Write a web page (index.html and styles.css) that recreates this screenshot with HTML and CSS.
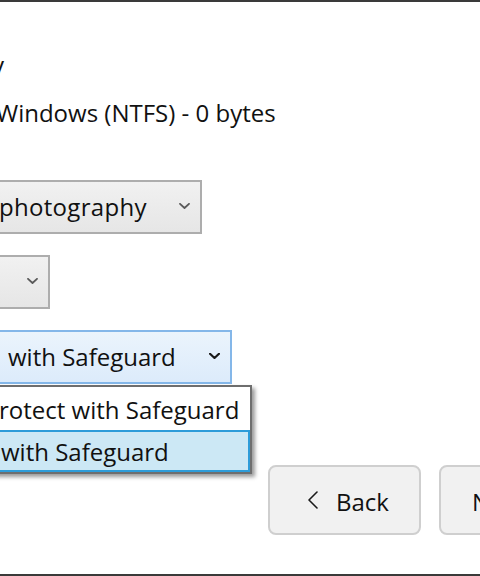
FILE: index.html
```html
<!DOCTYPE html>
<html lang="en">
<head>
<meta charset="utf-8">
<title>Safeguard setup</title>
<link rel="stylesheet" href="styles.css">
</head>
<body>
<div class="frame">
  <div class="content">
    <div class="line line-top"><span class="pre"><span>Summary</span></span></div>
    <div class="line line-drive">Windows (NTFS) - 0 bytes</div>

    <div class="select select-folder">
      <span class="select-text">photography</span>
      <svg class="chev" width="11" height="6" viewBox="0 0 11 6"><polyline points="1,0.8 5.5,5 10,0.8"/></svg>
    </div>

    <div class="select select-small">
      <span class="select-text"></span>
      <svg class="chev" width="11" height="6" viewBox="0 0 11 6"><polyline points="1,0.8 5.5,5 10,0.8"/></svg>
    </div>

    <div class="select-wrap">
      <div class="select select-open">
        <span class="select-text"><span class="pre pre-gap"><span>Protect </span></span>with Safeguard</span>
        <svg class="chev chev-dark" width="11" height="6" viewBox="0 0 11 6"><polyline points="1,0.8 5.5,5 10,0.8"/></svg>
      </div>
      <ul class="menu">
        <li class="opt"><span class="pre"><span>Do not p</span></span>rotect with Safeguard</li>
        <li class="opt opt-sel"><span class="pre"><span>Protect </span></span>with Safeguard</li>
      </ul>
    </div>
  </div>

  <div class="footer">
    <button class="btn btn-back" type="button">
      <svg class="btn-chev" width="12" height="18" viewBox="0 0 12 18"><polyline points="10,1 2,9 10,17"/></svg>
      <span>Back</span>
    </button>
    <button class="btn btn-next" type="button">
      <span>Next</span>
      <svg class="btn-chev" width="12" height="18" viewBox="0 0 12 18"><polyline points="2,1 10,9 2,17"/></svg>
    </button>
  </div>
</div>
</body>
</html>
```

FILE: styles.css
```css
html, body {
  margin: 0;
  padding: 0;
  width: 480px;
  height: 576px;
  overflow: hidden;
  background: #ffffff;
}

.frame {
  box-sizing: border-box;
  width: 480px;
  height: 576px;
  border-top: 2px solid #3a3a3a;
  border-bottom: 2px solid #3a3a3a;
  background: #ffffff;
  display: flex;
  flex-direction: column;
  overflow: hidden;
  font-family: "Open Sans", "Noto Sans", sans-serif;
  font-size: 24px;
  line-height: 32px;
  color: #111111;
}

.content {
  margin-left: -40px;
  flex: none;
}

.line {
  height: 32px;
  white-space: nowrap;
}

.line-top {
  margin-top: 47px;
  padding-left: 44px;
}

.line-drive {
  margin-top: 16px;
  padding-left: 36px;
}

/* hidden start of a label that runs off the left edge:
   a zero-width box whose content overflows to the left */
.pre {
  display: inline-flex;
  width: 0;
  justify-content: flex-end;
  white-space: pre;
}

.pre > span {
  flex: none;
}

.pre-gap > span {
  padding-right: 8px;
}

.select {
  box-sizing: border-box;
  height: 54px;
  border: 2px solid #adadad;
  background: linear-gradient(#f1f1f1, #e6e6e6);
  display: flex;
  align-items: center;
  white-space: nowrap;
}

.select-text {
  flex: 1;
  line-height: 32px;
  height: 32px;
  overflow: hidden;
}

.select-folder {
  margin-top: 51px;
  width: 242px;
}

.select-folder .select-text {
  padding-left: 37px;
  letter-spacing: 0.3px;
}

.select-small {
  margin-top: 21px;
  width: 90px;
}

.select-wrap {
  position: relative;
  margin-top: 21px;
  width: 272px;
}

.select-open {
  width: 272px;
  border-color: #84b7e9;
  background: linear-gradient(#ebf4fc, #dcebfb);
}

.select-open .select-text {
  padding-left: 46px;
}

.chev {
  flex: none;
  margin-right: 10px;
  margin-bottom: 3px;
  fill: none;
  stroke: #5a5a5a;
  stroke-width: 1.8;
  stroke-linecap: round;
  stroke-linejoin: round;
}

.chev-dark {
  stroke: #1a1a1a;
  stroke-width: 2.2;
}

.menu {
  position: absolute;
  top: calc(100% + 1px);
  left: 0;
  box-sizing: border-box;
  width: 292px;
  margin: 0;
  padding: 0;
  list-style: none;
  background: #ffffff;
  border: 2px solid #6e6e6e;
  box-shadow: 3px 3px 4px rgba(0, 0, 0, 0.4);
}

.opt {
  box-sizing: border-box;
  height: 43px;
  padding: 7px 0 4px 37px;
  line-height: 32px;
  white-space: nowrap;
}

.opt-sel {
  height: 42px;
  padding: 4px 0 2px 37px;
  background: #cce8f5;
  border: 2px solid #2d9cd9;
}

.footer {
  margin-top: auto;
  display: flex;
  gap: 18px;
  padding-left: 268px;
  padding-bottom: 39px;
}

.btn {
  flex: none;
  box-sizing: border-box;
  width: 153px;
  height: 70px;
  border: 2px solid #cfcfcf;
  border-radius: 8px;
  background: #f1f1f1;
  font: inherit;
  color: #111111;
  display: flex;
  align-items: center;
  padding: 3px 0 0 0;
  margin: 0;
}

.btn-back {
  padding-left: 37px;
  gap: 17px;
}

.btn-next {
  padding-left: 31px;
  gap: 17px;
}

.btn-chev {
  flex: none;
  fill: none;
  stroke: #1a1a1a;
  stroke-width: 1.6;
  stroke-linecap: round;
  stroke-linejoin: round;
  margin-top: -3px;
}
```
